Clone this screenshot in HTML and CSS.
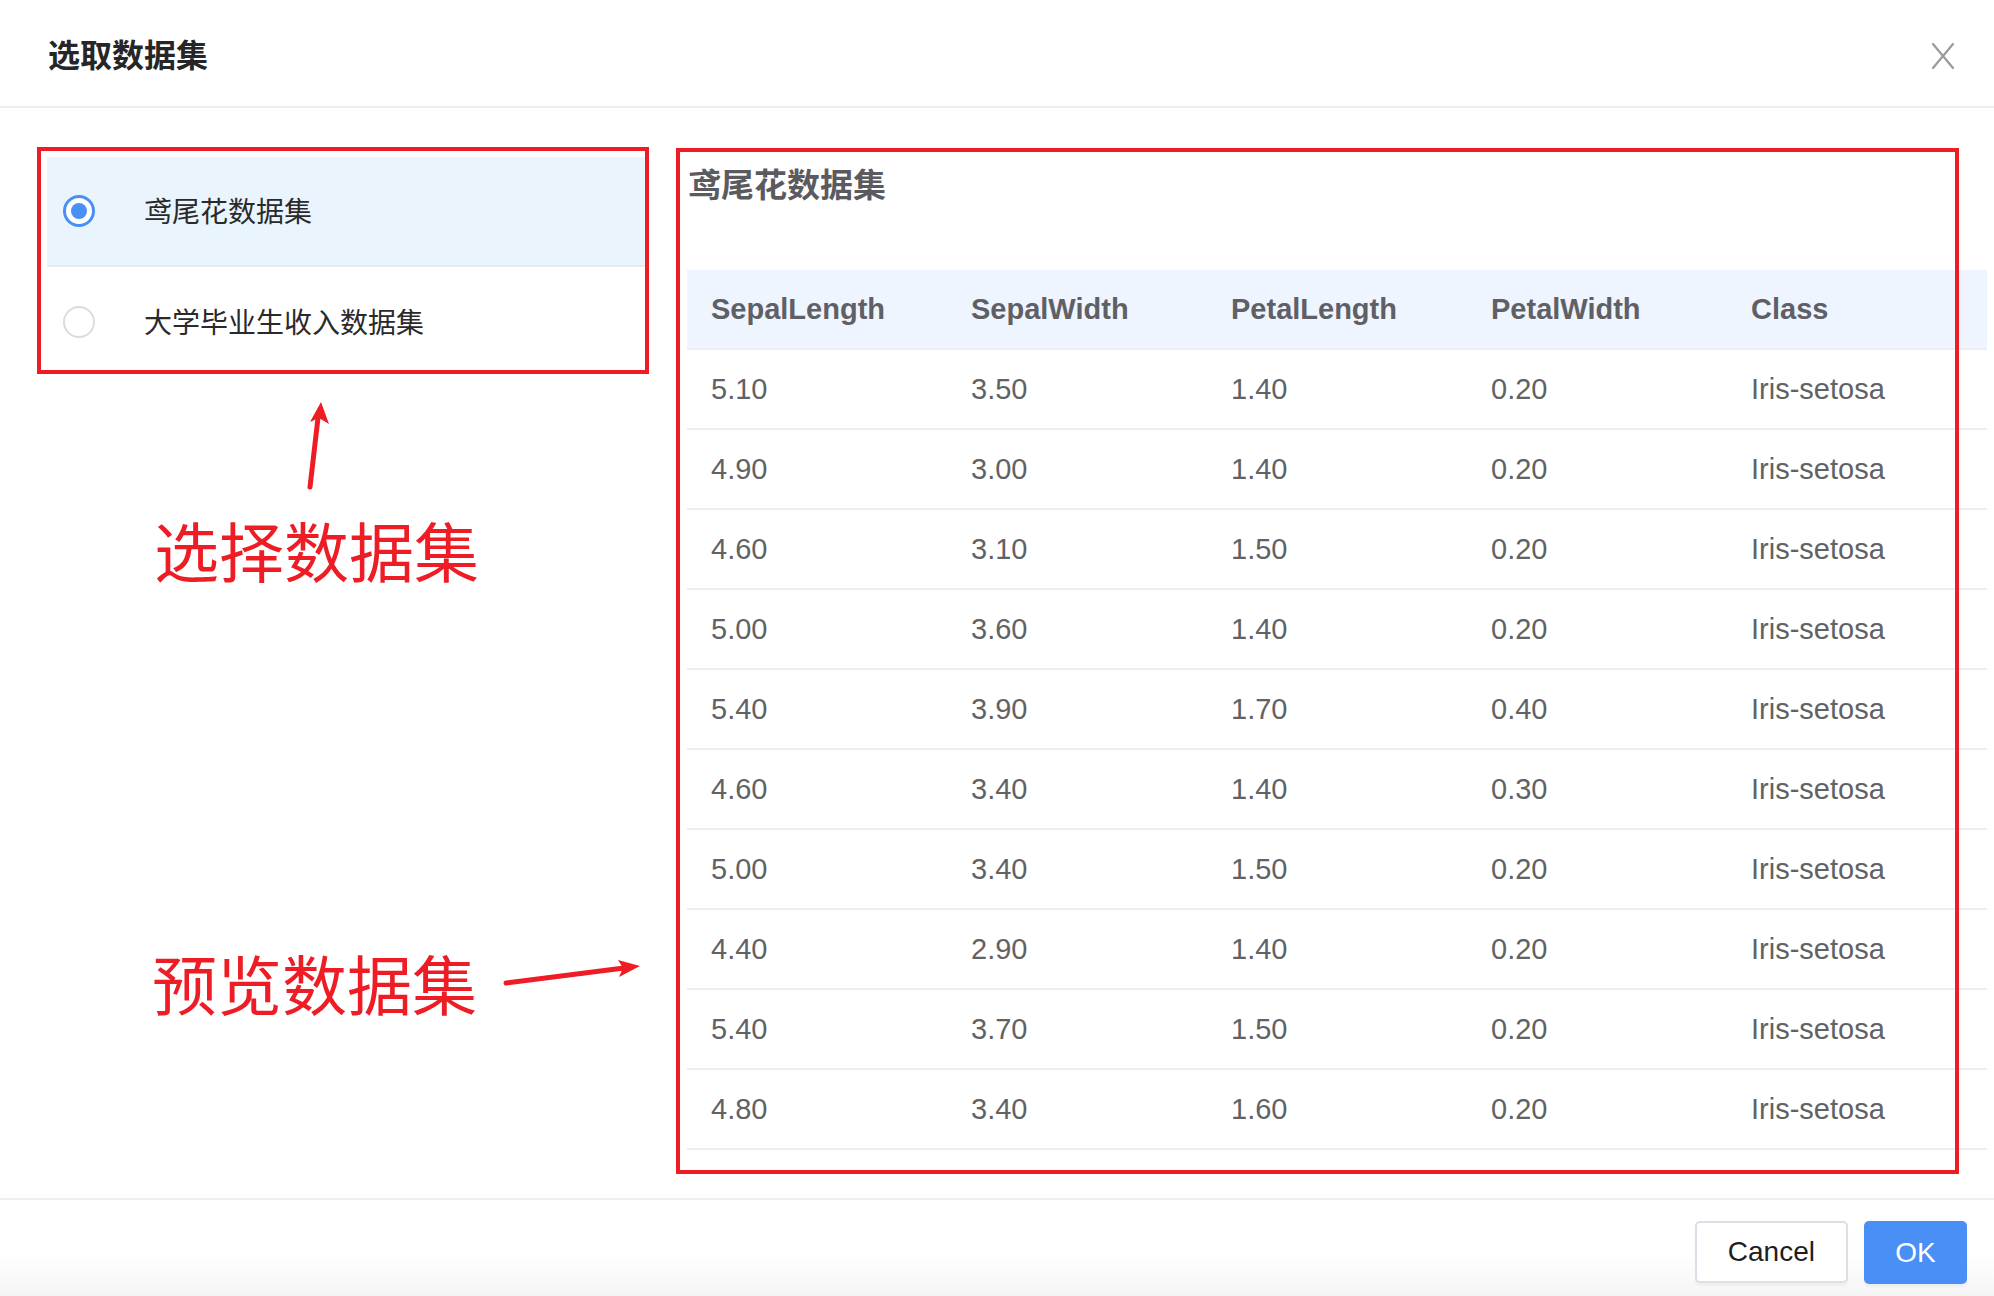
FILE: index.html
```html
<!DOCTYPE html>
<html lang="zh-CN">
<head>
<meta charset="utf-8">
<title>选取数据集</title>
<link rel="stylesheet" href="styles.css">
</head>
<body>
<div class="dialog">
  <header class="dlg-header">
    <h1 class="dlg-title">选取数据集</h1>
    <button class="dlg-close" aria-label="close">
      <svg width="22" height="26" viewBox="0 0 22 26"><path d="M1 1 L21 25 M21 1 L1 25" stroke="#9a9a9a" stroke-width="2.2" fill="none" stroke-linecap="round"/></svg>
    </button>
  </header>

  <main class="dlg-body">
    <section class="ds-list">
      <label class="ds-item is-active"><span class="radio is-checked"></span><span class="ds-name">鸢尾花数据集</span></label>
      <label class="ds-item"><span class="radio"></span><span class="ds-name">大学毕业生收入数据集</span></label>
    </section>

    <section class="preview">
      <h2 class="preview-title">鸢尾花数据集</h2>
      <table class="data-table">
        <thead>
          <tr><th>SepalLength</th><th>SepalWidth</th><th>PetalLength</th><th>PetalWidth</th><th>Class</th></tr>
        </thead>
        <tbody>
          <tr><td>5.10</td><td>3.50</td><td>1.40</td><td>0.20</td><td>Iris-setosa</td></tr>
          <tr><td>4.90</td><td>3.00</td><td>1.40</td><td>0.20</td><td>Iris-setosa</td></tr>
          <tr><td>4.60</td><td>3.10</td><td>1.50</td><td>0.20</td><td>Iris-setosa</td></tr>
          <tr><td>5.00</td><td>3.60</td><td>1.40</td><td>0.20</td><td>Iris-setosa</td></tr>
          <tr><td>5.40</td><td>3.90</td><td>1.70</td><td>0.40</td><td>Iris-setosa</td></tr>
          <tr><td>4.60</td><td>3.40</td><td>1.40</td><td>0.30</td><td>Iris-setosa</td></tr>
          <tr><td>5.00</td><td>3.40</td><td>1.50</td><td>0.20</td><td>Iris-setosa</td></tr>
          <tr><td>4.40</td><td>2.90</td><td>1.40</td><td>0.20</td><td>Iris-setosa</td></tr>
          <tr><td>5.40</td><td>3.70</td><td>1.50</td><td>0.20</td><td>Iris-setosa</td></tr>
          <tr><td>4.80</td><td>3.40</td><td>1.60</td><td>0.20</td><td>Iris-setosa</td></tr>
        </tbody>
      </table>
    </section>
  </main>

  <footer class="dlg-footer">
    <button class="btn">Cancel</button>
    <button class="btn btn-primary">OK</button>
  </footer>

  <div class="annot annot-box annot-box-left"></div>
  <div class="annot annot-box annot-box-right"></div>
  <div class="annot annot-label annot-label-select">选择数据集</div>
  <div class="annot annot-label annot-label-preview">预览数据集</div>
  <svg class="annot annot-arrows" width="1994" height="1296" viewBox="0 0 1994 1296">
    <line x1="310" y1="487" x2="318" y2="418" stroke="#ee1c25" stroke-width="5" stroke-linecap="round"/>
    <polygon points="321,402 329,424 319,418 310,422" fill="#ee1c25"/>
    <line x1="506" y1="983" x2="624" y2="968" stroke="#ee1c25" stroke-width="5" stroke-linecap="round"/>
    <polygon points="640,966 619,977 623,968 618,960" fill="#ee1c25"/>
  </svg>
</div>
</body>
</html>
```

FILE: styles.css
```css
* { box-sizing: border-box; }

html, body {
  margin: 0;
  padding: 0;
  background: #ffffff;
}

body {
  font-family: "Liberation Sans", "Noto Sans CJK SC", sans-serif;
}

.dialog {
  position: relative;
  width: 1994px;
  height: 1296px;
  overflow: hidden;
  background: #ffffff;
}

/* header */
.dlg-header {
  height: 108px;
  display: flex;
  align-items: center;
  padding: 0 40px 0 48px;
  border-bottom: 2px solid #eeeeee;
}

.dlg-title {
  margin: 0;
  font-family: "Noto Sans CJK SC", sans-serif;
  font-size: 32px;
  font-weight: 700;
  color: #262626;
  line-height: 40px;
}

.dlg-close {
  margin-left: auto;
  margin-top: 5px;
  padding: 0;
  border: 0;
  background: transparent;
  display: flex;
}

/* body */
.dlg-body {
  display: flex;
  align-items: flex-start;
  gap: 40px;
  padding: 49px 0 48px 47px;
}

.ds-list {
  width: 600px;
  flex: none;
}

.ds-item {
  display: flex;
  align-items: center;
  height: 110px;
  padding-left: 16px;
  gap: 49px;
  border-bottom: 2px solid #e6ebf0;
}

.ds-item:last-child { border-bottom: 0; }

.ds-item.is-active {
  background: #e9f4fd;
}

.radio {
  width: 32px;
  height: 32px;
  border-radius: 50%;
  border: 2px solid #dcdcdc;
  background: #ffffff;
  display: flex;
  align-items: center;
  justify-content: center;
  flex: none;
}

.radio.is-checked {
  border: 3px solid #4a8ff5;
}

.radio.is-checked::after {
  content: "";
  width: 16px;
  height: 16px;
  border-radius: 50%;
  background: #4a8ff5;
}

.ds-name {
  font-family: "Noto Sans CJK SC", sans-serif;
  font-size: 28px;
  line-height: 40px;
  padding-bottom: 3px;
  color: #2a2a2a;
}

.preview {
  width: 1300px;
  flex: none;
}

.preview-title {
  margin: 3px 0 64px 1px;
  font-family: "Noto Sans CJK SC", sans-serif;
  font-size: 33px;
  line-height: 46px;
  font-weight: 700;
  color: #5b5b5f;
}

.data-table {
  width: 1300px;
  border-collapse: separate;
  border-spacing: 0;
  table-layout: fixed;
  font-size: 29px;
  color: #606266;
}

.data-table th,
.data-table td {
  width: 260px;
  height: 80px;
  padding: 0 24px;
  text-align: left;
  line-height: 78px;
  border-bottom: 2px solid #ebeef3;
  white-space: nowrap;
}

.data-table th {
  background: #eef5fe;
  font-weight: 700;
  color: #5f6066;
}

.data-table td {
  font-weight: 400;
}

/* footer */
.dlg-footer {
  display: flex;
  justify-content: flex-end;
  gap: 16px;
  padding: 21px 27px 0 0;
  border-top: 2px solid #eeeeee;
  height: 98px;
  background: linear-gradient(to bottom, #ffffff 55%, #f5f5f5 100%);
}

.btn {
  height: 62px;
  padding: 0 31px;
  border-radius: 5px;
  border: 2px solid #dcdfe6;
  background: #ffffff;
  font-family: "Liberation Sans", sans-serif;
  font-size: 28px;
  color: #1e1e1e;
  box-shadow: 0 3px 2px rgba(0, 0, 0, 0.04);
}

.btn-primary {
  width: 103px;
  height: 63px;
  padding: 0;
  border: 0;
  background: #4a8ff5;
  color: #ffffff;
}

/* annotations drawn over the screenshot */
.annot {
  position: absolute;
  pointer-events: none;
}

.annot-box {
  border: 4px solid #ee1c25;
}

.annot-box-left {
  left: 37px;
  top: 147px;
  width: 612px;
  height: 227px;
}

.annot-box-right {
  left: 676px;
  top: 148px;
  width: 1283px;
  height: 1026px;
}

.annot-label {
  font-family: "Noto Sans CJK SC", sans-serif;
  font-size: 65px;
  line-height: 65px;
  color: #ee1c25;
  white-space: nowrap;
}

.annot-label-select {
  left: 154px;
  top: 517px;
}

.annot-label-preview {
  left: 152px;
  top: 950px;
}

.annot-arrows {
  left: 0;
  top: 0;
}
```
